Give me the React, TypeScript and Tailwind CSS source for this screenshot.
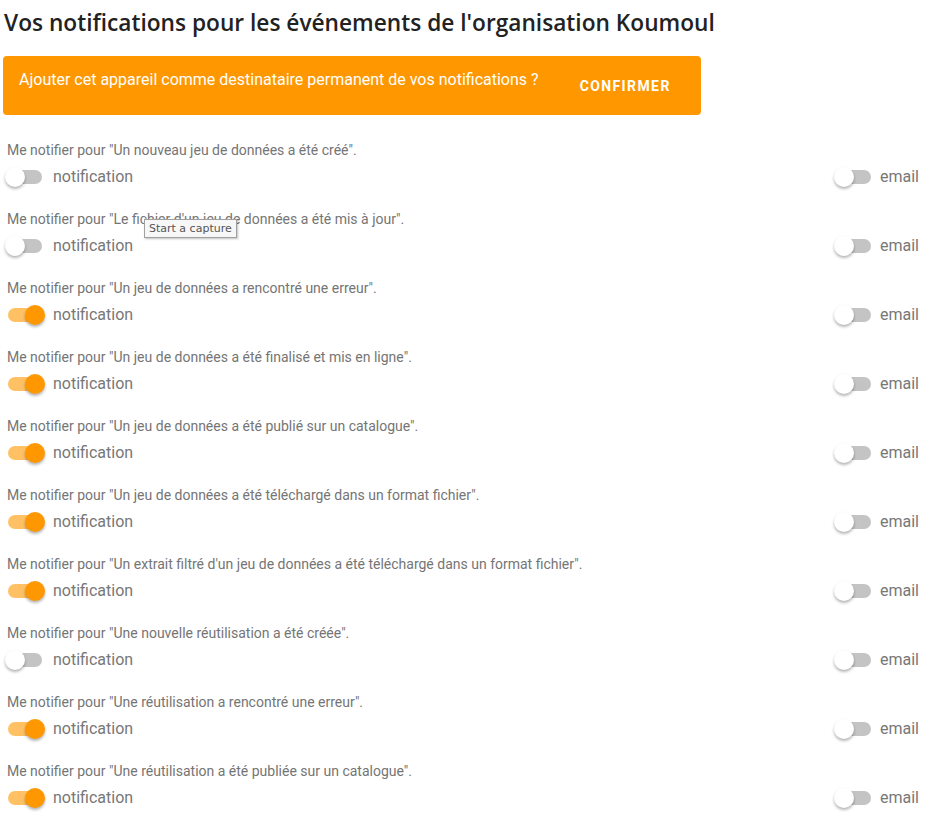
const rows: { text: string; on: boolean }[] = [
  { text: 'Un nouveau jeu de données a été créé', on: false },
  { text: "Le fichier d'un jeu de données a été mis à jour", on: false },
  { text: 'Un jeu de données a rencontré une erreur', on: true },
  { text: 'Un jeu de données a été finalisé et mis en ligne', on: true },
  { text: 'Un jeu de données a été publié sur un catalogue', on: true },
  { text: 'Un jeu de données a été téléchargé dans un format fichier', on: true },
  { text: "Un extrait filtré d'un jeu de données a été téléchargé dans un format fichier", on: true },
  { text: 'Une nouvelle réutilisation a été créée', on: false },
  { text: 'Une réutilisation a rencontré une erreur', on: true },
  { text: 'Une réutilisation a été publiée sur un catalogue', on: true },
]

const Switch = ({ on }: { on: boolean }) => (
  <div className="relative h-5 w-10 shrink-0">
    <div
      className={`absolute top-[3px] left-[3px] h-[14px] w-[34px] rounded-full ${on ? 'bg-[#ffc164]' : 'bg-[#c4c4c4]'}`}
    />
    <div
      className={`absolute top-0 size-5 rounded-full shadow-[0_2px_3px_rgba(0,0,0,0.3)] ${on ? 'left-5 bg-[#ff9800]' : 'left-0 bg-white'}`}
    />
  </div>
)

const NotifRow = ({ text, on }: { text: string; on: boolean }) => (
  <div className="h-[69px] pl-[7px] pr-4">
    <div className="h-5 text-[14px] leading-5 text-[#757575]">Me notifier pour "{text}".</div>
    <div className="mt-[5px] flex h-6 items-center justify-between">
      <div className="-ml-[2px] flex items-center gap-2">
        <Switch on={on} />
        <span className="text-base text-[#777]">notification</span>
      </div>
      <div className="flex items-center gap-[6px]">
        <Switch on={false} />
        <span className="text-base text-[#777]">email</span>
      </div>
    </div>
  </div>
)

export default function App() {
  return (
    <div className="relative h-[824px] w-[935px] overflow-hidden bg-white font-['Roboto',sans-serif]">
      <h2 className="pt-[8px] pl-1 font-['Open_Sans',sans-serif] text-[22.7px] leading-[30px] font-semibold text-[#222]">
        Vos notifications pour les événements de l'organisation Koumoul
      </h2>
      <div className="mt-[18px] ml-[3px] flex h-[59px] w-[698px] items-start rounded bg-[#ff9800] pt-[12px] pl-4 text-white">
        <span className="text-base leading-6">Ajouter cet appareil comme destinataire permanent de vos notifications ?</span>
        <span className="mt-[10px] ml-[41px] text-sm leading-4 font-bold tracking-[0.1em]">CONFIRMER</span>
      </div>
      <div className="mt-[25px]">
        {rows.map((r) => (
          <NotifRow key={r.text} text={r.text} on={r.on} />
        ))}
      </div>
      <div className="absolute top-[219px] left-[144px] border border-[#a0a0a0] bg-[#f7f7f7] px-1 py-px font-['DejaVu_Sans',sans-serif] text-[11px] leading-[15px] text-[#555] shadow-[1px_1px_2px_rgba(0,0,0,0.25)]">
        Start a capture
      </div>
    </div>
  )
}
